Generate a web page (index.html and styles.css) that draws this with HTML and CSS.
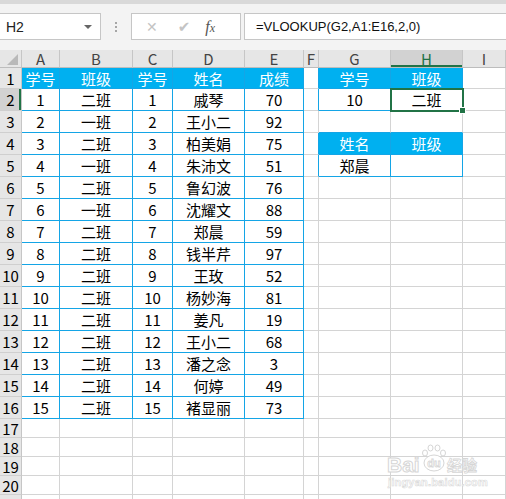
FILE: index.html
```html
<!DOCTYPE html>
<html lang="zh-CN">
<head>
    <meta charset="UTF-8">
    <title>VLOOKUP</title>
    <link rel="stylesheet" href="styles.css">
</head>
<body>
    <div class="topbar">
        <div class="namebox">H2<span class="arrow"></span></div>
        <div class="dots"><span></span><span></span><span></span></div>
        <div class="fxbox">
            <span class="cancel">✕</span>
            <span class="enter">✔</span>
            <span class="fx">f<i>x</i></span>
        </div>
        <div class="formula">=VLOOKUP(G2,A1:E16,2,0)</div>
    </div>

    <table class="sheet">
        <colgroup>
            <col style="width:22px"><col style="width:38px"><col style="width:73px"><col style="width:40px"><col style="width:72px">
            <col style="width:59px"><col style="width:15px"><col style="width:72px"><col style="width:72px"><col style="width:43px">
        </colgroup>
        <tr class="colhead">
            <td class="corner"></td><td>A</td><td>B</td><td>C</td><td>D</td><td>E</td><td>F</td><td>G</td><td class="cur">H</td><td>I</td>
        </tr>
        <tr class="r1">
            <td class="rh">1</td><td class="hd">学号</td><td class="hd">班级</td><td class="hd">学号</td><td class="hd">姓名</td><td class="hd">成绩</td><td class="rb"></td><td class="hd">学号</td><td class="hd">班级</td><td></td>
        </tr>
        <tr>
            <td class="rh cur">2</td><td class="b">1</td><td class="b">二班</td><td class="b">1</td><td class="b">戚琴</td><td class="b">70</td><td class="rb"></td><td class="b">10</td><td class="b sel">二班</td><td></td>
        </tr>
        <tr>
            <td class="rh">3</td><td class="b">2</td><td class="b">一班</td><td class="b">2</td><td class="b">王小二</td><td class="b">92</td><td></td><td class="bb"></td><td class="bb"></td><td></td>
        </tr>
        <tr>
            <td class="rh">4</td><td class="b">3</td><td class="b">二班</td><td class="b">3</td><td class="b">柏美娟</td><td class="b">75</td><td class="rb"></td><td class="hd">姓名</td><td class="hd">班级</td><td></td>
        </tr>
        <tr>
            <td class="rh">5</td><td class="b">4</td><td class="b">一班</td><td class="b">4</td><td class="b">朱沛文</td><td class="b">51</td><td class="rb"></td><td class="b">郑晨</td><td class="b"></td><td></td>
        </tr>
        <tr>
            <td class="rh">6</td><td class="b">5</td><td class="b">二班</td><td class="b">5</td><td class="b">鲁幻波</td><td class="b">76</td><td></td><td></td><td></td><td></td>
        </tr>
        <tr>
            <td class="rh">7</td><td class="b">6</td><td class="b">一班</td><td class="b">6</td><td class="b">沈耀文</td><td class="b">88</td><td></td><td></td><td></td><td></td>
        </tr>
        <tr>
            <td class="rh">8</td><td class="b">7</td><td class="b">二班</td><td class="b">7</td><td class="b">郑晨</td><td class="b">59</td><td></td><td></td><td></td><td></td>
        </tr>
        <tr>
            <td class="rh">9</td><td class="b">8</td><td class="b">二班</td><td class="b">8</td><td class="b">钱半芹</td><td class="b">97</td><td></td><td></td><td></td><td></td>
        </tr>
        <tr>
            <td class="rh">10</td><td class="b">9</td><td class="b">二班</td><td class="b">9</td><td class="b">王玫</td><td class="b">52</td><td></td><td></td><td></td><td></td>
        </tr>
        <tr>
            <td class="rh">11</td><td class="b">10</td><td class="b">二班</td><td class="b">10</td><td class="b">杨妙海</td><td class="b">81</td><td></td><td></td><td></td><td></td>
        </tr>
        <tr>
            <td class="rh">12</td><td class="b">11</td><td class="b">二班</td><td class="b">11</td><td class="b">姜凡</td><td class="b">19</td><td></td><td></td><td></td><td></td>
        </tr>
        <tr>
            <td class="rh">13</td><td class="b">12</td><td class="b">二班</td><td class="b">12</td><td class="b">王小二</td><td class="b">68</td><td></td><td></td><td></td><td></td>
        </tr>
        <tr>
            <td class="rh">14</td><td class="b">13</td><td class="b">二班</td><td class="b">13</td><td class="b">潘之念</td><td class="b">3</td><td></td><td></td><td></td><td></td>
        </tr>
        <tr>
            <td class="rh">15</td><td class="b">14</td><td class="b">二班</td><td class="b">14</td><td class="b">何婷</td><td class="b">49</td><td></td><td></td><td></td><td></td>
        </tr>
        <tr>
            <td class="rh">16</td><td class="b">15</td><td class="b">二班</td><td class="b">15</td><td class="b">褚显丽</td><td class="b">73</td><td></td><td></td><td></td><td></td>
        </tr>
        <tr class="short">
            <td class="rh">17</td><td></td><td></td><td></td><td></td><td></td><td></td><td></td><td></td><td></td>
        </tr>
        <tr class="short">
            <td class="rh">18</td><td></td><td></td><td></td><td></td><td></td><td></td><td></td><td></td><td></td>
        </tr>
        <tr class="short">
            <td class="rh">19</td><td></td><td></td><td></td><td></td><td></td><td></td><td></td><td></td><td></td>
        </tr>
        <tr class="short">
            <td class="rh">20</td><td></td><td></td><td></td><td></td><td></td><td></td><td></td><td></td><td></td>
        </tr>
        <tr class="short">
            <td class="rh"></td><td></td><td></td><td></td><td></td><td></td><td></td><td></td><td></td><td></td>
        </tr>
    </table>

    <!-- watermark from the screenshot -->
    <div class="watermark">
        <span class="wm-bai">Bai</span>
        <svg class="wm-paw" width="26" height="28" viewBox="0 0 26 28">
            <g fill="#fff" stroke="#d6d6d6" stroke-width="1">
                <ellipse cx="4" cy="9" rx="2.5" ry="3"/>
                <ellipse cx="9.5" cy="4" rx="2.5" ry="3"/>
                <ellipse cx="16.5" cy="4" rx="2.5" ry="3"/>
                <ellipse cx="22" cy="9" rx="2.5" ry="3"/>
                <ellipse cx="13" cy="19" rx="10" ry="8"/>
            </g>
            <text x="13" y="23" text-anchor="middle" font-family="Liberation Sans, sans-serif" font-size="11" font-weight="bold" fill="#fff" stroke="#d6d6d6" stroke-width="0.8">du</text>
        </svg>
        <span class="wm-jy">经验</span>
        <div class="wm-url">jingyan.baidu.com</div>
    </div>
</body>
</html>
```

FILE: styles.css
```css
body {
    margin: 0;
    width: 506px;
    height: 499px;
    overflow: hidden;
    background-color: #fff;
    font-family: "Noto Sans CJK SC", sans-serif;
    position: relative;
}
.topbar {
    height: 50px;
    box-sizing: border-box;
    border-top: 4px solid #d9d9d9;
    padding-top: 9px;
    background-color: #f3f3f3;
    display: flex;
    align-items: flex-start;
}
.namebox {
    width: 101px;
    height: 27px;
    box-sizing: border-box;
    border: 1px solid #c6c6c6;
    border-left: none;
    background-color: #fff;
    display: flex;
    align-items: center;
    padding-left: 6px;
    font-family: "Liberation Sans", sans-serif;
    font-size: 14px;
    color: #222;
    position: relative;
}
.arrow {
    position: absolute;
    right: 8px;
    top: 11px;
    border-left: 4px solid transparent;
    border-right: 4px solid transparent;
    border-top: 4px solid #666;
}
.dots {
    width: 30px;
    height: 27px;
    display: flex;
    flex-direction: column;
    align-items: center;
    justify-content: center;
    gap: 2px;
}
.dots span {
    width: 2px;
    height: 2px;
    background-color: #a6a6a6;
}
.fxbox {
    width: 110px;
    height: 27px;
    box-sizing: border-box;
    border: 1px solid #c6c6c6;
    background-color: #fff;
    display: flex;
    align-items: center;
}
.cancel {
    margin-left: 14px;
    font-family: "DejaVu Sans", sans-serif;
    font-size: 14px;
    color: #c4c4c4;
}
.enter {
    margin-left: 20px;
    font-family: "DejaVu Sans", sans-serif;
    font-size: 15px;
    color: #c4c4c4;
}
.fx {
    margin-left: 15px;
    font-family: "Liberation Serif", serif;
    font-style: italic;
    font-size: 16px;
    color: #555;
}
.fx i {
    font-size: 12px;
}
.formula {
    flex: 1;
    margin-left: 3px;
    height: 27px;
    box-sizing: border-box;
    border: 1px solid #c6c6c6;
    border-right: none;
    background-color: #fff;
    display: flex;
    align-items: center;
    padding-left: 11px;
    font-family: "Liberation Sans", sans-serif;
    font-size: 13px;
    color: #111;
}

.sheet {
    border-collapse: separate;
    border-spacing: 0;
    table-layout: fixed;
    width: 506px;
}
.sheet tr {
    height: 22px;
}
.sheet tr.colhead {
    height: 18px;
}
.sheet tr.r1 {
    height: 21px;
}
.sheet tr.short {
    height: 19px;
}
.sheet td {
    padding: 0;
    border-right: 1px solid #d4d4d4;
    border-bottom: 1px solid #d4d4d4;
    text-align: center;
    vertical-align: middle;
    font-size: 15px;
    line-height: 1;
    color: #000;
    white-space: nowrap;
}
.colhead td {
    background-color: #e6e6e6;
    border-right-color: #c6c6c6;
    border-bottom-color: #bdbdbd;
    color: #444;
    font-size: 15px;
}
.colhead td.cur {
    background-color: #d2d2d2;
    box-shadow: inset 0 -2px 0 #217346;
    color: #217346;
}
.corner {
    position: relative;
}
.corner::after {
    content: '';
    position: absolute;
    right: 3px;
    bottom: 2px;
    border-left: 11px solid transparent;
    border-bottom: 11px solid #b9b9b9;
}
.rh {
    background-color: #e6e6e6;
    border-right-color: #c6c6c6 !important;
    border-bottom-color: #cfcfcf !important;
    color: #444;
}
.rh.cur {
    background-color: #d2d2d2;
    box-shadow: inset -2px 0 0 #217346;
}

/* blue table borders */
.sheet td.b,
.sheet td.hd {
    border-right-color: #14a5e6;
    border-bottom-color: #14a5e6;
}
.sheet td.hd {
    background-color: #00b0f0;
    color: #fff;
}
.sheet td.rb {
    border-right-color: #14a5e6;
}
.sheet td.bb {
    border-bottom-color: #14a5e6;
}
.sheet td.sel {
    position: relative;
}
.sheet td.sel::after {
    content: '';
    position: absolute;
    left: -1px;
    top: -1px;
    right: -2px;
    bottom: -2px;
    border: 2px solid #217346;
}
.sheet td.sel::before {
    content: '';
    position: absolute;
    right: -4px;
    bottom: -4px;
    width: 5px;
    height: 5px;
    background-color: #217346;
    border: 1px solid #fff;
    z-index: 1;
}

.watermark {
    position: absolute;
    left: 386px;
    top: 443px;
    width: 100px;
    height: 46px;
    font-family: "Liberation Sans", sans-serif;
}
.wm-bai {
    position: absolute;
    left: 1px;
    top: 10px;
    font-size: 21px;
    font-weight: bold;
    color: #fff;
    -webkit-text-stroke: 1px #d6d6d6;
}
.wm-paw {
    position: absolute;
    left: 35px;
    top: 1px;
}
.wm-jy {
    position: absolute;
    left: 61px;
    top: 14px;
    font-family: "Noto Sans CJK SC", sans-serif;
    font-size: 15px;
    font-weight: bold;
    line-height: 1;
    color: #fff;
    -webkit-text-stroke: 0.8px #d6d6d6;
}
.wm-url {
    position: absolute;
    left: 2px;
    top: 33px;
    font-size: 11px;
    font-weight: bold;
    color: #fff;
    -webkit-text-stroke: 0.6px #dadada;
    letter-spacing: 0.2px;
}
```
